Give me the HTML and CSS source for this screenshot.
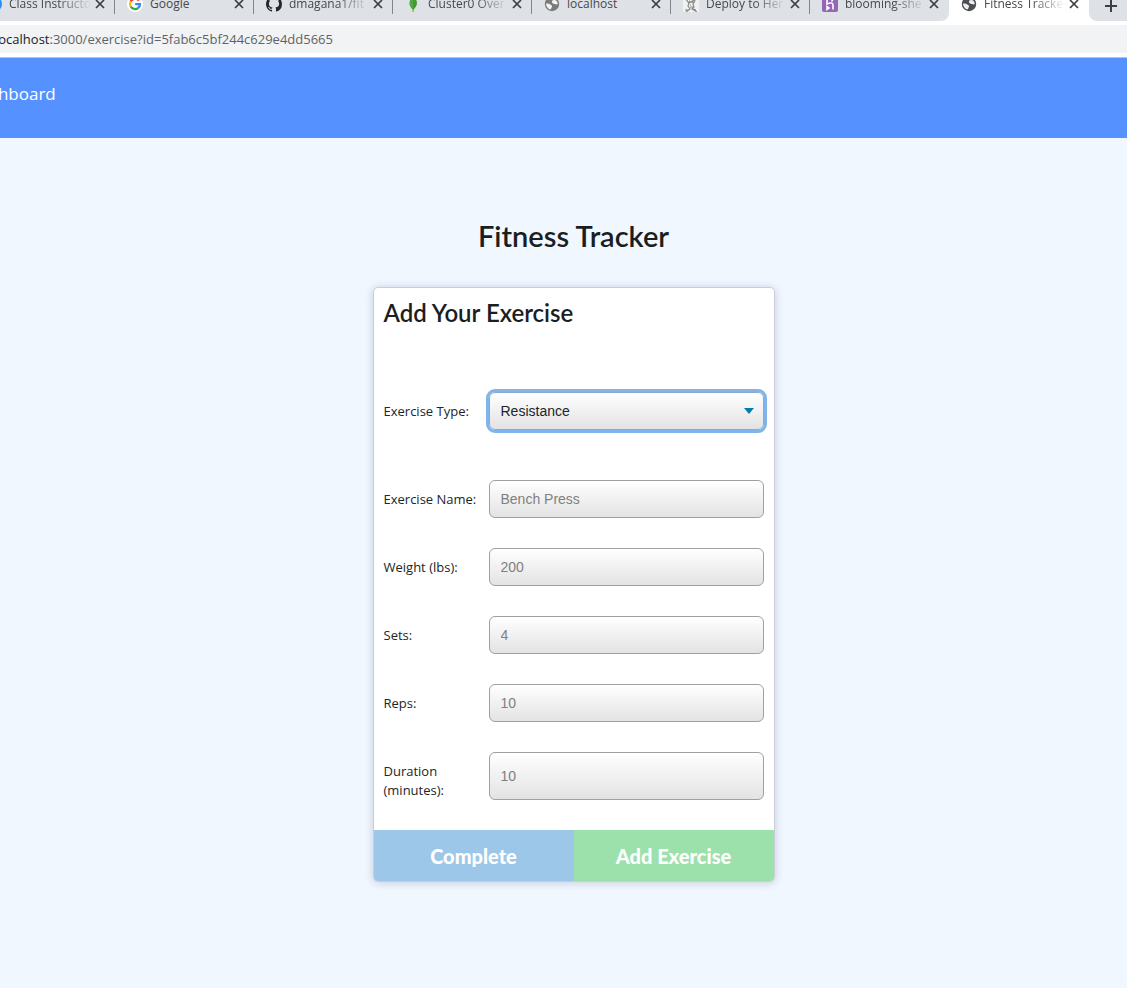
FILE: index.html
```
<!DOCTYPE html>
<html lang="en">
<head>
<meta charset="utf-8">
<title>Fitness Tracker</title>
<link rel="stylesheet" href="styles.css">
</head>
<body>
<svg class="defs" aria-hidden="true">
  <symbol id="close" viewBox="0 0 10 10"><path d="M1 1l8 8M9 1L1 9" fill="none" stroke="#3c4043" stroke-width="1.7"/></symbol>
  <symbol id="globe" viewBox="0 0 16 16"><circle cx="8" cy="8" r="7.2" fill="currentColor"/><path d="M2 7.500c2 0 4 0 5 1.500 1 .3 1.500 1 .8 2-.6.8-.3 1.800-1.300 2.500C3.800 12.800 2 10.500 2 7.500zM8.500 4.500c1-.8 2.500-.7 4 .3l1.500 3c-1.300.9-2 .7-3 .2-1.200 0-1.700-.3-2.500-1-.8-.7-.8-1.700 0-2.500z" fill="#fff" opacity=".9"/></symbol>
</svg>
<header class="browser">
  <nav class="tabs" aria-label="Browser tabs">
    <div class="tab first">
      <svg class="icon" viewBox="0 0 16 16"><circle cx="8" cy="8" r="8" fill="#2d8cff"/></svg>
      <span class="name">Class Instructo</span>
      <button class="close" aria-label="Close Class Instructor"><svg><use href="#close"/></svg></button>
    </div>
    <div class="tab">
      <svg class="icon" viewBox="0 0 16 16"><circle cx="8" cy="8" r="8" fill="#fff"/><g fill="none" stroke-width="2.300"><path d="M12 4.500A5 5 0 0 0 3.700 5.500" stroke="#ea4335"/><path d="M3.700 5.500a5 5 0 0 0 0 5" stroke="#fbbc05"/><path d="M3.700 10.500a5 5 0 0 0 7.500 1.500" stroke="#34a853"/><path d="M11.200 12A5 5 0 0 0 13 8.200H8.200" stroke="#4285f4"/></g></svg>
      <span class="name whole">Google</span>
      <button class="close" aria-label="Close Google"><svg><use href="#close"/></svg></button>
    </div>
    <div class="tab">
      <svg class="icon" viewBox="0 0 16 16"><path fill="#24292e" d="M8 0C3.580 0 0 3.580 0 8c0 3.540 2.290 6.530 5.470 7.590.4.070.55-.17.55-.38 0-.19-.01-.82-.01-1.490-2.010.37-2.530-.49-2.690-.94-.09-.23-.48-.94-.82-1.130-.28-.15-.68-.52-.01-.53.63-.01 1.080.58 1.230.82.72 1.210 1.870.87 2.330.66.07-.52.28-.87.51-1.070-1.780-.2-3.640-.89-3.640-3.950 0-.87.31-1.590.82-2.150-.08-.2-.36-1.020.08-2.120 0 0 .67-.21 2.200.82.64-.18 1.320-.27 2-.27s1.360.09 2 .27c1.530-1.040 2.200-.82 2.200-.82.44 1.100.16 1.920.08 2.120.51.56.82 1.270.82 2.150 0 3.070-1.870 3.750-3.650 3.950.29.25.54.73.54 1.480 0 1.070-.01 1.930-.01 2.200 0 .21.15.46.55.38A8.010 8.010 0 0 0 16 8c0-4.420-3.580-8-8-8z"/></svg>
      <span class="name">dmagana1/fit</span>
      <button class="close" aria-label="Close dmagana1"><svg><use href="#close"/></svg></button>
    </div>
    <div class="tab">
      <svg class="icon" viewBox="0 0 16 16"><path d="M8 0c5 5 5 9 .5 13.500V16h-1v-2.500C3 9 3.500 5 8 0z" fill="#4faa41"/><path d="M8 0c5 5 5 9 .5 13.500H8z" fill="#439934"/></svg>
      <span class="name">Cluster0 Over</span>
      <button class="close" aria-label="Close Cluster0"><svg><use href="#close"/></svg></button>
    </div>
    <div class="tab">
      <svg class="icon grey" viewBox="0 0 16 16"><use href="#globe"/></svg>
      <span class="name whole">localhost</span>
      <button class="close" aria-label="Close localhost"><svg><use href="#close"/></svg></button>
    </div>
    <div class="tab">
      <svg class="icon" viewBox="0 0 16 16"><rect width="16" height="16" fill="#f1f1f1"/><path d="M3 3c1 2 2 3 3 4l-1 3 2 3-4 3M12 3c0 3-1 4-2 5l1 3-2 2 5 3M6 7c2-2 4-1 5 0M7 9h1m2 0h1M2 14h4m4-1l3 1M6 5l2 1 3-2M7 11h3" fill="none" stroke="#888" stroke-width="1.200"/></svg>
      <span class="name">Deploy to Her</span>
      <button class="close" aria-label="Close Deploy"><svg><use href="#close"/></svg></button>
    </div>
    <div class="tab last">
      <svg class="icon" viewBox="0 0 16 16"><rect width="16" height="16" rx="2" fill="#9566b5"/><path d="M5 2v6c3-1.500 6-1.500 6 1v4.500M5 10.500v3l2-1.500zM11 2c0 1.500-.5 2.500-1.500 3.500" fill="none" stroke="#fff" stroke-width="1.600"/></svg>
      <span class="name">blooming-she</span>
      <button class="close" aria-label="Close blooming"><svg><use href="#close"/></svg></button>
    </div>
    <div class="tab active">
      <svg class="icon dark" viewBox="0 0 16 16"><use href="#globe"/></svg>
      <span class="name">Fitness Tracke</span>
      <button class="close" aria-label="Close Fitness Tracker"><svg><use href="#close"/></svg></button>
    </div>
    <button class="new" aria-label="New tab"><svg viewBox="0 0 12 12"><path d="M6 0v12M0 6h12" stroke="#3c4043" stroke-width="2"/></svg></button>
  </nav>
  <div class="address"><span class="url"><b>localhost</b>:3000/exercise?id=5fab6c5bf244c629e4dd5665</span></div>
</header>
<nav class="navbar"><a href="#">Dashboard</a></nav>
<main class="page">
  <h1>Fitness Tracker</h1>
  <form class="card">
    <div class="fields">
      <h2>Add Your Exercise</h2>
      <div class="row type"><label for="type">Exercise Type:</label>
        <div class="select"><select id="type"><option>Resistance</option><option>Cardio</option></select><svg viewBox="0 0 10 6"><path d="M0 0h10L5 6z" fill="#007caa"/></svg></div></div>
      <div class="row"><label for="name">Exercise Name:</label><input id="name" placeholder="Bench Press"></div>
      <div class="row"><label for="weight">Weight (lbs):</label><input id="weight" placeholder="200"></div>
      <div class="row"><label for="sets">Sets:</label><input id="sets" placeholder="4"></div>
      <div class="row"><label for="reps">Reps:</label><input id="reps" placeholder="10"></div>
      <div class="row"><label for="duration">Duration (minutes):</label><input id="duration" placeholder="10"></div>
    </div>
    <div class="actions"><button type="button" class="complete">Complete</button><button type="button" class="add">Add Exercise</button></div>
  </form>
</main>
</body>
</html>
```
FILE: styles.css
```
* { box-sizing: border-box; }
body { margin: 0; min-height: 100vh; background: #f0f7ff; color: #212529; font-family: "Open Sans", "Noto Sans", sans-serif; overflow-x: hidden; }
button { border: 0; padding: 0; background: none; font: inherit; }
.defs { position: absolute; width: 0; height: 0; }

.browser { background: #fff; overflow: hidden; }
.tabs { display: flex; height: 21px; background: #fff; }
.tab { flex: 0 0 139px; min-width: 0; display: flex; align-items: center; height: 21px; padding: 0 10px 13px 12px; background: #dee1e6; position: relative; }
.tab::after { content: ""; position: absolute; right: 0; top: 0; height: 14px; width: 1px; background: #80868b; }
.tab.first { flex-basis: 115px; padding-left: 0; }
.tab.first .icon { margin-left: -14px; }
.tab.last { border-radius: 0 0 8px 0; }
.tab.last::after, .tab.active::after { display: none; }
.tab.active { background: #fff; flex-basis: 140px; }
.icon { flex: none; width: 16px; height: 16px; }
.grey { color: #7b7b7b; }
.dark { color: #4b4e52; }
.name { flex: 1; min-width: 0; margin: 0 4px 0 7px; white-space: nowrap; font-size: 12px; line-height: 16px; color: #45494d; -webkit-mask-image: linear-gradient(90deg, #000 60%, transparent); mask-image: linear-gradient(90deg, #000 60%, transparent); }
.name.whole { -webkit-mask-image: none; mask-image: none; }
.close { flex: none; }
.close, .close svg { display: block; width: 10px; height: 10px; }
.new { flex: 1; height: 21px; padding: 0 0 13px 16px; background: #dee1e6; border-radius: 0 0 0 8px; text-align: left; }
.new svg { display: block; width: 12px; height: 12px; }
.address { display: flex; align-items: center; height: 28px; margin: 4px 0; background: #f1f3f4; }
.url { margin-left: -5px; font-size: 13px; line-height: 20px; color: #5f6368; white-space: nowrap; }
.url b { font-weight: 400; color: #202124; }

.navbar { padding: 24px 0 32px; border-top: 1px solid #a9c6fb; background: #5692ff; }
.navbar a { display: block; margin-left: -32px; font-size: 17px; line-height: 24px; color: #fff; text-decoration: none; }

.page { display: flex; flex-direction: column; align-items: center; padding: 80px 0 64px 20px; }
h1, h2 { margin: 0; font-family: Lato, sans-serif; font-weight: 600; color: #1b1e21; }
h1 { font-size: 29px; line-height: 36px; margin-bottom: 33px; }
h2 { font-size: 24px; line-height: 30px; }
.card { width: 402px; max-width: 100%; background: #fff; border: 1px solid #c9ced8; border-radius: 5px; box-shadow: 0 1px 8px rgba(34, 36, 80, .2); overflow: hidden; }
.fields { display: flex; flex-direction: column; gap: 30px; padding: 10px 10px 30px; }
.row { display: grid; grid-template-columns: 95px 1fr; column-gap: 10px; min-height: 38px; }
.row.type { margin: 34px 0 20px; }
label { padding-top: 10px; font-size: 13px; line-height: 19px; }
input, select { width: 100%; height: 100%; padding: 0 11px; border: 1px solid #a0a0a0; border-radius: 6px; background: linear-gradient(#fff, #e3e3e3); font: 14px "Liberation Sans", Arial, sans-serif; color: #212529; }
input::placeholder { color: #808080; opacity: 1; }
.select { position: relative; }
select { appearance: none; border-color: #8fa9cc; outline: 3px solid #80b4eb; outline-offset: 0; }
.select svg { position: absolute; right: 10px; top: 16px; width: 10px; height: 6px; pointer-events: none; }
.actions { display: grid; grid-template-columns: 1fr 1fr; }
.actions button { height: 51px; font: 900 20px/24px Lato, sans-serif; color: #fff; }
.complete { background: #9cc7e9; }
.add { background: #9ce1ab; }
```
